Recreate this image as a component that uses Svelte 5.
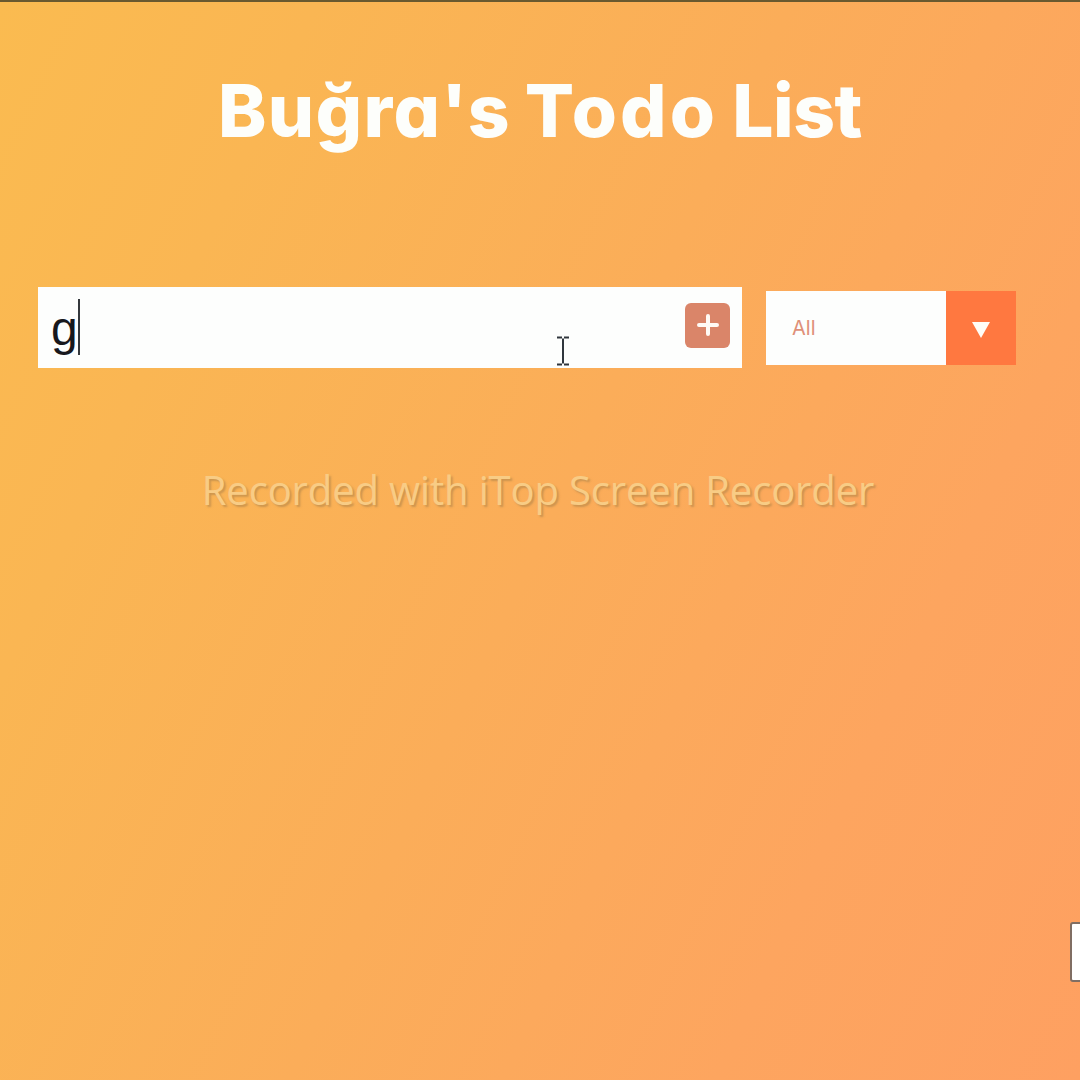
<script>
  let task = $state('g');
</script>

<main>
  <h1><span class="name">Buğra's</span><span class="todo">Todo</span><span class="list">List</span></h1>

  <form onsubmit={(e) => e.preventDefault()}>
    <div class="entry">
      <span class="typed">{task}</span><i class="caret"></i>
      <button type="button" aria-label="Add">
        <svg width="24" height="24" viewBox="0 0 24 24"><path d="M12 3v18M3 12h18" /></svg>
      </button>
    </div>
    <div class="select">
      <span class="value">All</span>
      <span class="arrow">
        <svg width="18" height="16" viewBox="0 0 18 16"><path d="M0 0h18L9 16z" /></svg>
      </span>
    </div>
  </form>

  <p class="watermark">Recorded with iTop Screen Recorder</p>

  <svg class="pointer" width="14" height="30" viewBox="0 0 14 30">
    <path d="M1 1.5h5M8 1.5h5M7 2.5v25M1 28.5h5M8 28.5h5" />
  </svg>
  <div class="edge-box"></div>
</main>

<style>
  :global(body) { margin: 0; }
  main {
    position: relative;
    box-sizing: border-box;
    width: 1080px;
    height: 1080px;
    overflow: hidden;
    border-top: 2px solid #69592f;
    background: linear-gradient(115deg, #fabb50 0%, #fab653 20%, #fbad59 50%, #fda55f 77%, #fea061 100%);
    display: flex;
    flex-direction: column;
    align-items: center;
  }
  h1 {
    margin: 64px 0 0;
    height: 90px;
    font: 800 73px/90px Inter, sans-serif;
    font-feature-settings: 'cv11' 1;
    display: flex;
    gap: 14px;
    color: #fdfefb;
    white-space: nowrap;
  }
  .name { letter-spacing: 1.3px; }
  .todo { letter-spacing: 3.2px; }
  .list { letter-spacing: -0.5px; }
  form {
    align-self: flex-start;
    display: flex;
    align-items: center;
    gap: 24px;
    margin: 131px 0 0 38px;
  }
  .entry {
    box-sizing: border-box;
    width: 704px;
    height: 81px;
    padding: 0 12px 5px 13px;
    background: #fdfefd;
    display: flex;
    align-items: center;
  }
  .typed { font: 48px/56px 'Liberation Sans', sans-serif; color: #17181d; padding-top: 7px; }
  .caret { width: 2px; height: 56px; background: #34383c; margin-top: 4px; }
  button {
    margin-left: auto;
    width: 45px;
    height: 45px;
    padding: 0;
    border: 0;
    border-radius: 6px;
    background: #da8569;
    display: grid;
    place-items: center;
  }
  button path { stroke: #fffaf5; stroke-width: 4; stroke-linecap: round; fill: none; }
  .select { display: flex; width: 250px; height: 74px; }
  .value {
    flex: 1;
    padding-left: 26px;
    background: #fdfefd;
    color: #df9078;
    font: 20px/75px Inter, sans-serif;
  }
  .arrow { width: 70px; background: #ff7840; display: grid; place-items: center; padding-top: 4px; box-sizing: border-box; }
  .arrow path { fill: #fffdf6; }
  .watermark {
    margin: 94px 4px 0 0;
    font: 400 40px/56px 'Open Sans', sans-serif;
    letter-spacing: -0.14px;
    color: #f8cc85;
    text-shadow: 2px 2px 2px #bd8b4cc0;
    white-space: nowrap;
  }
  .pointer { position: absolute; left: 556px; top: 334px; }
  .pointer path { stroke: #30363d; stroke-width: 2; fill: none; }
  .edge-box {
    position: absolute;
    left: 1070px;
    top: 920px;
    width: 20px;
    height: 56px;
    border: 2px solid #806e63;
    border-radius: 3px;
    background: #fff;
  }
</style>
